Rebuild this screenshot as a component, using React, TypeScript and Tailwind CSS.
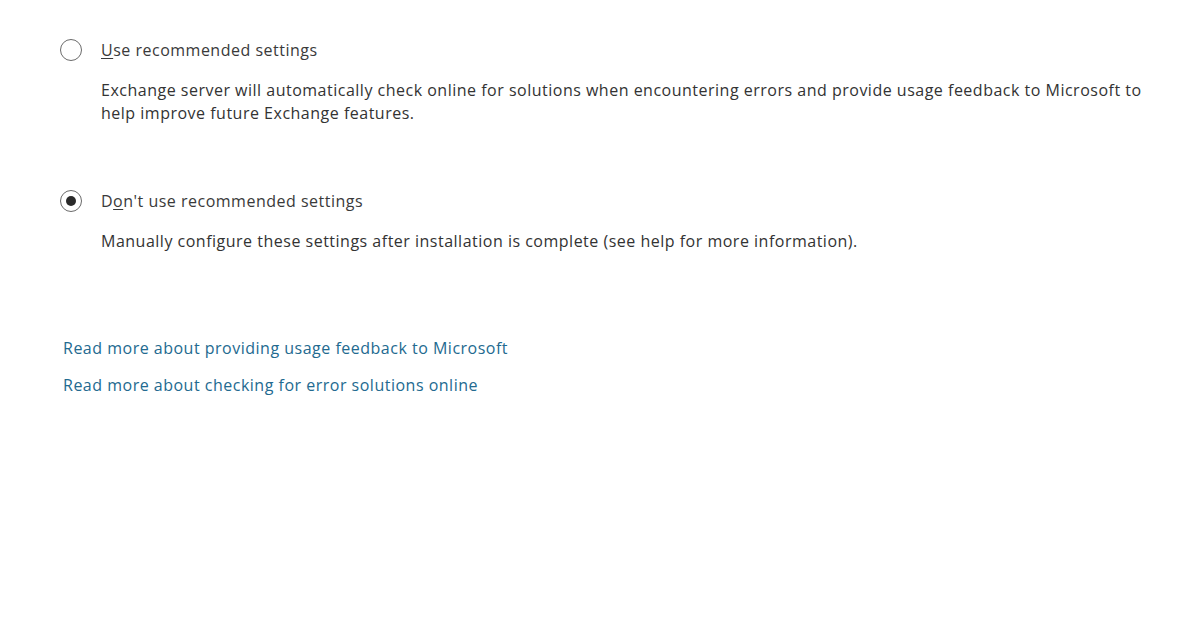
import React, { useState } from 'react';

const font = { fontFamily: '"Open Sans", "Noto Sans", sans-serif' };

interface OptionProps {
  checked: boolean;
  onSelect: () => void;
  before: string;
  accessKey: string;
  after: string;
  description: string;
}

const Radio: React.FC<{ checked: boolean }> = ({ checked }) => (
  <span className="flex h-[22px] w-[22px] shrink-0 items-center justify-center rounded-full border-[1.5px] border-[#6b6b6b] bg-white">
    {checked && <span className="h-[10px] w-[10px] rounded-full bg-[#2a2a2a]" />}
  </span>
);

const Option: React.FC<OptionProps> = ({ checked, onSelect, before, accessKey, after, description }) => (
  <div className="flex flex-col">
    <button type="button" onClick={onSelect} className="flex items-center gap-[19px] text-left">
      <Radio checked={checked} />
      <span className="text-[16px] tracking-[0.5px] text-[#3a3a3a]">
        {before}
        <span className="underline underline-offset-2">{accessKey}</span>
        {after}
      </span>
    </button>
    <p className="mt-[17px] ml-[41px] max-w-[1060px] text-[16px] leading-[23px] tracking-[0.5px] text-[#333]">
      {description}
    </p>
  </div>
);

export default function App() {
  const [recommended, setRecommended] = useState(false);

  return (
    <div className="h-[628px] w-[1196px] bg-white" style={font}>
      <div className="flex flex-col pl-[60px] pt-[38px]">
        <Option
          checked={recommended}
          onSelect={() => setRecommended(true)}
          before=""
          accessKey="U"
          after="se recommended settings"
          description="Exchange server will automatically check online for solutions when encountering errors and provide usage feedback to Microsoft to help improve future Exchange features."
        />
        <div className="mt-[64px]">
          <Option
            checked={!recommended}
            onSelect={() => setRecommended(false)}
            before="D"
            accessKey="o"
            after="n't use recommended settings"
            description="Manually configure these settings after installation is complete (see help for more information)."
          />
        </div>
        <div className="mt-[83px] ml-[3px] flex flex-col items-start gap-[13px] text-[16px] tracking-[0.5px] text-[#236a90]">
          <a href="#" className="hover:underline">Read more about providing usage feedback to Microsoft</a>
          <a href="#" className="hover:underline">Read more about checking for error solutions online</a>
        </div>
      </div>
    </div>
  );
}
